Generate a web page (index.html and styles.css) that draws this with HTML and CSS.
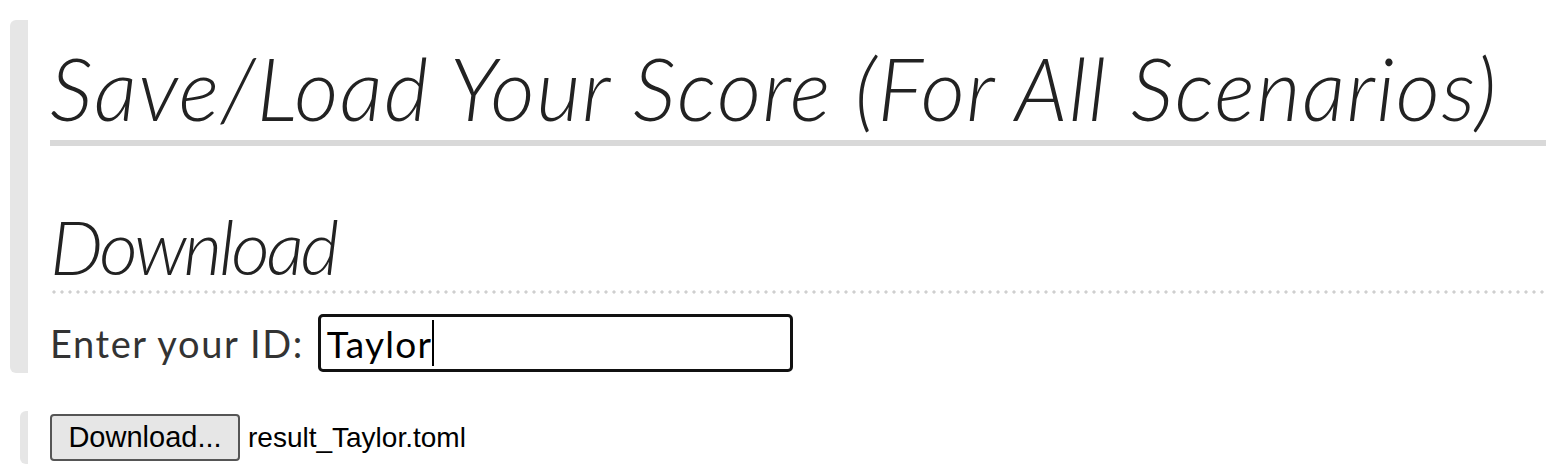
FILE: index.html
```html
<!DOCTYPE html>
<html>
<head>
<meta charset="utf-8">
<link rel="stylesheet" href="styles.css">
</head>
<body>
<section class="card card-main">
  <h1 class="title">Save/Load Your Score (For All Scenarios)</h1>
  <h2 class="subtitle">Download</h2>
  <div class="id-row">
    <label class="id-label" for="uid">Enter your ID:</label>
    <div class="id-input"><span class="id-value">Taylor</span><span class="caret"></span></div>
  </div>
</section>
<section class="card card-action">
  <button class="dl-btn" type="button">Download...</button>
  <span class="file-name">result_Taylor.toml</span>
</section>
</body>
</html>
```
FILE: styles.css
```css
html, body {
  margin: 0;
  padding: 0;
  background: #ffffff;
}
body {
  padding: 20px 8px 0 10px;
  font-family: "Lato", "Liberation Sans", sans-serif;
  color: #222;
}
.card {
  border-left-style: solid;
  border-left-color: #e6e6e6;
  border-radius: 6px 0 0 6px;
}
.card-main {
  border-left-width: 18px;
  padding: 18px 0 1px 22px;
}
.title {
  margin: 0;
  font-family: "Lato", sans-serif;
  font-style: italic;
  font-weight: 300;
  font-size: 86px;
  line-height: 100px;
  letter-spacing: 1.45px;
  padding-bottom: 2px;
  border-bottom: 6px solid #d9d9d9;
  color: #222;
  white-space: nowrap;
}
.subtitle {
  margin: 60px 0 0 0;
  font-family: "Lato", sans-serif;
  font-style: italic;
  font-weight: 300;
  font-size: 75px;
  line-height: 80px;
  letter-spacing: -3.3px;
  padding-bottom: 8px;
  color: #222;
  background-image: radial-gradient(circle, #cfcfcf 1.4px, transparent 1.8px);
  background-size: 8px 4px;
  background-repeat: repeat-x;
  background-position: 0 100%;
}
.id-row {
  display: flex;
  align-items: center;
  gap: 14px;
  margin-top: 20px;
}
.id-label {
  font-family: "Lato", sans-serif;
  font-size: 38px;
  color: #333;
  letter-spacing: 1.6px;
}
.id-input {
  box-sizing: border-box;
  width: 475px;
  height: 58px;
  border: 3px solid #111;
  border-radius: 5px;
  display: flex;
  align-items: center;
  padding-left: 6px;
}
.id-value {
  font-family: "Lato", sans-serif;
  font-size: 37px;
  letter-spacing: 1.3px;
  color: #000;
}
.caret {
  width: 1.5px;
  height: 46px;
  background: #000;
  margin-left: 0;
}
.card-action {
  margin: 38px 0 0 10px;
  border-left-width: 8px;
  padding: 3px 0 3px 22px;
  display: flex;
  align-items: center;
  gap: 8px;
}
.dl-btn {
  box-sizing: border-box;
  height: 47px;
  width: 190px;
  padding: 0;
  font-family: "Liberation Sans", Arial, sans-serif;
  font-size: 29px;
  color: #000;
  background: #e6e6e6;
  border: 2px solid #555;
  border-radius: 4px;
}
.file-name {
  font-family: "Liberation Sans", Arial, sans-serif;
  font-size: 28px;
  color: #000;
}
```
